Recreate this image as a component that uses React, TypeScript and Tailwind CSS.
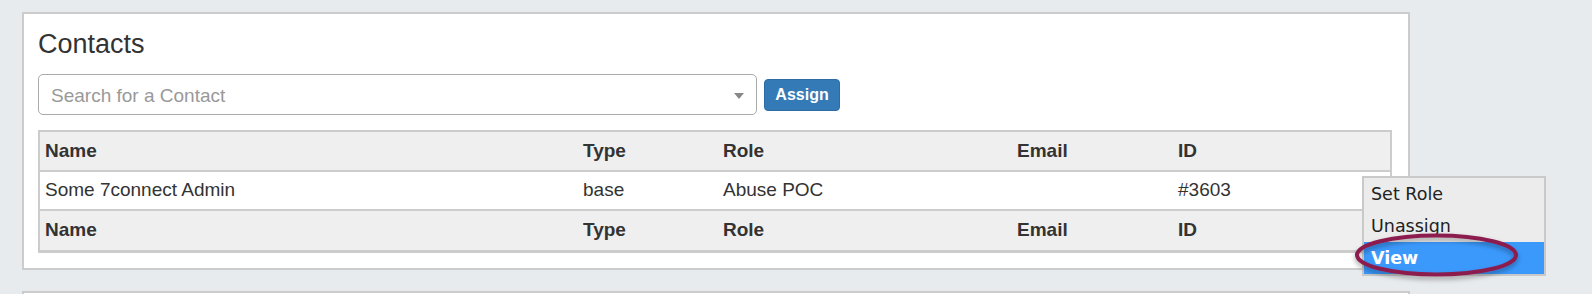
const columns = ["Name", "Type", "Role", "Email", "ID"];

const contacts = [
  { name: "Some 7connect Admin", type: "base", role: "Abuse POC", email: "", id: "#3603" },
];

const rowGrid = "grid grid-cols-[538px_140px_294px_161px_1fr] items-center";

const HeaderRow = ({ last }: { last?: boolean }) => (
  <div
    className={`${rowGrid} bg-[#efefef] font-bold border-[#cccccc] ${
      last ? "h-[42px] border-b-[3px]" : "h-10 border-b-2"
    }`}
  >
    {columns.map((c) => (
      <div key={c} className="pl-[5px]">
        {c}
      </div>
    ))}
  </div>
);

const ContextMenu = () => (
  <div className="absolute left-[1362px] top-[176px] w-[184px] border-2 border-[#c9c9c9] bg-[#ececec] font-['DejaVu_Sans',sans-serif] text-[17.5px] text-[#222]">
    <div className="h-8 flex items-center pl-[7px]">Set Role</div>
    <div className="h-8 flex items-center pl-[7px]">Unassign</div>
    <div className="h-8 flex items-center pl-[7px] bg-[#3b99fc] text-white font-bold">View</div>
  </div>
);

const Highlight = () => (
  <svg className="absolute left-[1346px] top-[225px]" width="182" height="64" viewBox="0 0 182 64">
    <defs>
      <filter id="shadow" x="-20%" y="-40%" width="140%" height="180%">
        <feDropShadow dx="0" dy="3" stdDeviation="2.5" floodColor="#000" floodOpacity="0.35" />
      </filter>
    </defs>
    <ellipse cx="90.5" cy="30" rx="79.5" ry="19.5" fill="none" stroke="#8c1f4e" strokeWidth="4" filter="url(#shadow)" />
  </svg>
);

export default function App() {
  return (
    <div className="relative min-h-[294px] bg-[#e8ebee] pt-3 pl-[22px] font-['Liberation_Sans',Arial,sans-serif] text-[#333]">
      <div className="w-[1388px] border-2 border-[#cccccc] bg-white pt-[15px] pl-[14px] pr-4 pb-[15px]">
        <h2 className="text-[27px] leading-[30px] text-[#333]">Contacts</h2>

        <div className="mt-[15px] flex items-center gap-[7px]">
          <div className="relative flex h-[41px] w-[719px] items-center rounded-[5px] border-[1.5px] border-[#aaaaaa] pl-3">
            <span className="pt-1 text-[19px] text-[#999]">Search for a Contact</span>
            <span className="absolute right-[12px] top-[18px] h-0 w-0 border-x-[5px] border-t-[6px] border-x-transparent border-t-[#888]" />
          </div>
          <button className="h-8 w-[76px] rounded-[4px] border border-[#2e6da4] bg-[#337ab7] text-[16px] font-bold text-white">
            Assign
          </button>
        </div>

        <div className="mt-[15px] border-x-2 border-t-2 border-[#cccccc] text-[19px]">
          <HeaderRow />
          {contacts.map((c) => (
            <div key={c.id} className={`${rowGrid} h-[39px] border-b-2 border-[#cccccc] bg-white`}>
              <div className="pl-[5px]">{c.name}</div>
              <div className="pl-[5px]">{c.type}</div>
              <div className="pl-[5px]">{c.role}</div>
              <div className="pl-[5px]">{c.email}</div>
              <div className="pl-[5px]">{c.id}</div>
            </div>
          ))}
          <HeaderRow last />
        </div>
      </div>

      <div className="mt-[21px] h-[10px] w-[1388px] border-2 border-[#cccccc] bg-white" />

      <ContextMenu />
      <Highlight />
    </div>
  );
}
